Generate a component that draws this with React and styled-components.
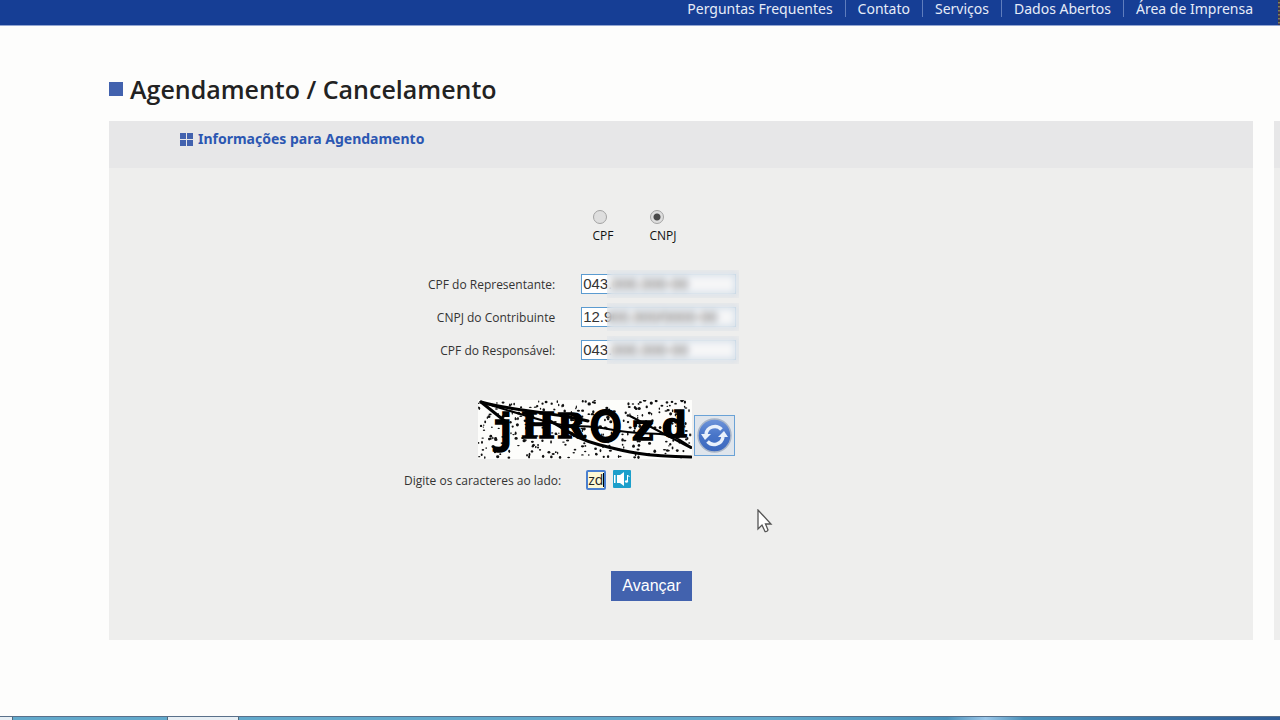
import React, { useState } from "react";
import styled, { createGlobalStyle } from "styled-components";

const LINKS = [
  "Perguntas Frequentes",
  "Contato",
  "Serviços",
  "Dados Abertos",
  "Área de Imprensa",
];

const FIELDS = [
  { id: "representante", label: "CPF do Representante:", value: "043.000.000-00" },
  { id: "contribuinte", label: "CNPJ do Contribuinte", value: "12.900.000/0000-00" },
  { id: "responsavel", label: "CPF do Responsável:", value: "043.000.000-00" },
];

// same seed every time, so the noise does not move between renders
const makeSpecks = (count) => {
  let seed = 77;
  const next = () => {
    seed = (seed * 16807) % 2147483647;
    return seed / 2147483647;
  };
  return Array.from({ length: count }, () => ({
    x: next() * 213,
    y: next() * 58,
    rx: 0.6 + next() * 1.1,
    ry: 0.6 + next() * 1.1,
  }));
};
const SPECKS = makeSpecks(330);

const CaptchaImage = () => (
  <svg width="214" height="59" viewBox="0 0 214 59" role="img" aria-label="Captcha">
    <rect width="214" height="59" fill="#fdfdfb" />
    {SPECKS.map((s, i) => (
      <ellipse key={i} cx={s.x} cy={s.y} rx={s.rx} ry={s.ry} fill="#111" />
    ))}
    <g
      fontFamily="'DejaVu Serif', serif"
      fontWeight="700"
      fill="#000"
      stroke="#000"
      strokeWidth="1.5"
    >
      <text x="13" y="43" fontSize="42" fontFamily="'Liberation Mono', monospace">j</text>
      <text x="43" y="38" fontSize="36">H</text>
      <text x="79" y="38" fontSize="34">R</text>
      <text x="112" y="41" fontSize="40" fontFamily="'DejaVu Sans', sans-serif" fontWeight="400" strokeWidth="3">O</text>
      <text x="154" y="40" fontSize="38">z</text>
      <text x="184" y="37" fontSize="36">d</text>
    </g>
    <g fill="none" stroke="#000" strokeLinecap="round">
      <path d="M3 2 C25 9 45 15 70 22 S105 24 130 29 S165 33 182 34 S205 43 213 47" strokeWidth="2" />
      <path d="M3 2 C35 11 75 12 110 21" strokeWidth="3" />
      <path d="M70 20 C90 30 95 38 122 45 S165 56 213 57" strokeWidth="3" />
      <path d="M3 2 L28 22" strokeWidth="3" />
      <path d="M152 16 L213 48" strokeWidth="2" />
    </g>
  </svg>
);

const RefreshIcon = () => (
  <svg width="37" height="37" viewBox="0 0 37 37" aria-hidden="true">
    <defs>
      <linearGradient id="ball" x1="0" y1="0" x2="0" y2="1">
        <stop offset="0" stopColor="#6f95da" />
        <stop offset="0.5" stopColor="#4774c8" />
        <stop offset="1" stopColor="#3c68bd" />
      </linearGradient>
    </defs>
    <circle cx="18.5" cy="18.5" r="16.5" fill="url(#ball)" stroke="#a9b6c9" strokeWidth="1.5" />
    <g fill="none" stroke="#e9f1fc" strokeWidth="3.5">
      <path d="M10 17 A9 9 0 0 1 25.5 12.5" />
      <path d="M27 20 A9 9 0 0 1 11.5 24.5" />
    </g>
    <path d="M5 17 H15 L9 23 Z" fill="#e9f1fc" />
    <path d="M32 20 H22 L28 14 Z" fill="#e9f1fc" />
  </svg>
);

const SoundIcon = () => (
  <svg width="18" height="18" viewBox="0 0 18 18" aria-hidden="true">
    <rect width="18" height="18" rx="1" fill="#1c9fcb" />
    <path d="M1 5 H2.5 V13 H1 Z M4 5 H7 L11 2 V16 L7 13 H4 Z" fill="#fff" />
    <path d="M14.5 11 V5 L16.5 7" fill="none" stroke="#fff" />
    <ellipse cx="13.5" cy="11.5" rx="1.6" ry="1.3" fill="#fff" />
  </svg>
);

const GridIcon = () => (
  <svg width="13" height="13" viewBox="0 0 13 13" fill="#4262ae" aria-hidden="true">
    <path d="M0 0h6v6H0z M7 0h6v6H7z M0 7h6v6H0z M7 7h6v6H7z" />
  </svg>
);

export default function App() {
  const [person, setPerson] = useState("cnpj");
  const [code, setCode] = useState("zd");

  return (
    <Page>
      <GlobalStyle />
      <TopBar>
        <Nav>
          {LINKS.map((link) => (
            <NavLink href="#" key={link}>
              {link}
            </NavLink>
          ))}
        </Nav>
        <BarEdge />
      </TopBar>

      <Main>
        <Title>Agendamento / Cancelamento</Title>
        <Columns>
          <Panel>
            <PanelHeader>
              <GridIcon />
              <PanelTitle>Informações para Agendamento</PanelTitle>
            </PanelHeader>
            <Form onSubmit={(e) => e.preventDefault()}>
              <RadioRow>
                {["cpf", "cnpj"].map((type) => (
                  <RadioLabel key={type}>
                    <Radio
                      type="radio"
                      name="person"
                      checked={person === type}
                      onChange={() => setPerson(type)}
                    />
                    {type.toUpperCase()}
                  </RadioLabel>
                ))}
              </RadioRow>

              <Fields>
                {FIELDS.map((field) => (
                  <React.Fragment key={field.id}>
                    <Label htmlFor={field.id}>{field.label}</Label>
                    <Masked>
                      <Input id={field.id} defaultValue={field.value} />
                      <Mask />
                    </Masked>
                  </React.Fragment>
                ))}
              </Fields>

              <CaptchaRow>
                <CaptchaImage />
                <RefreshButton type="button" aria-label="Atualizar imagem">
                  <RefreshIcon />
                </RefreshButton>
              </CaptchaRow>

              <CodeRow>
                <CodeLabel htmlFor="code">Digite os caracteres ao lado:</CodeLabel>
                <CodeBox>
                  <CodeInput
                    id="code"
                    value={code}
                    onChange={(e) => setCode(e.target.value)}
                  />
                  <Caret />
                </CodeBox>
                <SoundButton type="button" aria-label="Ouvir caracteres">
                  <SoundIcon />
                </SoundButton>
              </CodeRow>

              <Submit type="submit">Avançar</Submit>
            </Form>
          </Panel>
          <SidePanel>
            <HeaderStrip />
          </SidePanel>
        </Columns>
      </Main>

      <Taskbar>
        <Task $width="13px" $open />
        <Task $width="155px" />
        <Task $width="71px" $open />
      </Taskbar>

      <Pointer width="16" height="24" viewBox="0 0 16 24" aria-hidden="true">
        <path
          d="M1 1 V20 L5 16 L8 22.5 Q10 23 11 21 L8.5 15 H14 Z"
          fill="#fff"
          stroke="#555"
          strokeWidth="1.3"
        />
      </Pointer>
    </Page>
  );
}

/*STYLES*/
const GlobalStyle = createGlobalStyle`
  * {
    box-sizing: border-box;
  }
  body {
    margin: 0;
    background: #fdfdfc;
    font-family: "Open Sans", sans-serif;
    color: #222;
  }
`;

const Page = styled.div`
  position: relative;
  display: flex;
  flex-direction: column;
  min-height: 100vh;
`;

const TopBar = styled.header`
  display: flex;
  justify-content: flex-end;
  height: 26px;
  background: #163e95;
  border-bottom: 1px solid #93a6d2;
`;

const Nav = styled.nav`
  display: flex;
  align-items: flex-start;
  margin-right: 25px;
`;

const NavLink = styled.a`
  padding-left: 12px;
  font-family: "Noto Sans", sans-serif;
  font-size: 14px;
  line-height: 17px;
  color: #e6ecf8;
  text-decoration: none;

  &:not(:last-child) {
    padding-right: 12px;
    border-right: 1px solid #5f7dbd;
  }
`;

const BarEdge = styled.div`
  width: 2px;
  background: repeating-linear-gradient(#3c3b46 0 2px, #7d8a50 2px 3px, #6c4868 3px 4px);
`;

const Main = styled.main`
  flex: 1;
  padding: 46px 0 40px 109px;
`;

const Title = styled.h1`
  display: flex;
  align-items: center;
  gap: 7px;
  margin: 0 0 15px;
  font-size: 25px;
  font-weight: 600;
  line-height: 34px;

  &::before {
    content: "";
    width: 14px;
    height: 14px;
    background: #4262ae;
  }
`;

const Columns = styled.div`
  display: grid;
  grid-template-columns: 1fr 6px;
  column-gap: 21px;
`;

const Panel = styled.section`
  background: #eeeeed;
`;

const SidePanel = styled.aside`
  background: #eeeeed;
`;

const HeaderStrip = styled.div`
  height: 47px;
  background: #e7e7e8;
`;

const PanelHeader = styled(HeaderStrip)`
  display: flex;
  gap: 5px;
  align-items: center;
  padding: 0 0 11px 71px;
`;

const PanelTitle = styled.h2`
  margin: 0;
  font-family: "Noto Sans", sans-serif;
  font-size: 14px;
  font-weight: 700;
  line-height: 18px;
  color: #2c57b2;
`;

const Form = styled.form`
  padding: 42px 0 39px;
`;

const RadioRow = styled.div`
  display: flex;
  gap: 36px;
  padding-left: calc(42% + 3px);
`;

const RadioLabel = styled.label`
  display: flex;
  flex-direction: column;
  gap: 4px;
  font-size: 12px;
  line-height: 16px;
  color: #111;
`;

const Radio = styled.input`
  appearance: none;
  width: 14px;
  height: 14px;
  margin: 0 0 0 1px;
  border: 1px solid #a3a3a3;
  border-radius: 50%;
  background: #dedede;

  &:checked {
    background: radial-gradient(circle, #4a4a4a 3px, #dedede 4px);
  }
`;

const Fields = styled.div`
  display: grid;
  grid-template-columns: 39% 1fr;
  gap: 13px 26px;
  margin-top: 30px;
`;

const Label = styled.label`
  font-size: 12px;
  line-height: 21px;
  height: 20px;
  text-align: right;
  color: #333;
`;

const CodeLabel = styled(Label)`
  padding-right: 18px;
`;

const Masked = styled.div`
  position: relative;
  width: 155px;
  height: 20px;
`;

const Input = styled.input`
  display: block;
  width: 100%;
  height: 20px;
  padding: 0 1px 2px;
  border: 1px solid #5b9bd0;
  background: #fff;
  font-family: "Liberation Sans", sans-serif;
  font-size: 15px;
  color: #333;
`;

const Mask = styled.span`
  position: absolute;
  top: -4px;
  right: -3px;
  bottom: -4px;
  left: 26px;
  background: rgba(225, 226, 230, 0.3);
  backdrop-filter: blur(3px);
  pointer-events: none;
`;

const CaptchaRow = styled.div`
  display: flex;
  align-items: flex-end;
  gap: 2px;
  margin-top: 40px;
  padding-left: calc(32% + 3px);
`;

const RefreshButton = styled.button`
  display: flex;
  align-items: center;
  justify-content: center;
  width: 41px;
  height: 41px;
  margin-bottom: 3px;
  padding: 0;
  border: 1px solid #6aa2d6;
  background: #dfe5ec;
`;

const CodeRow = styled.div`
  display: grid;
  grid-template-columns: calc(39% + 24px) 20px 18px;
  column-gap: 7px;
  margin-top: 11px;
`;

const CodeBox = styled.div`
  position: relative;
`;

const CodeInput = styled.input`
  display: block;
  width: 20px;
  height: 20px;
  padding: 0 0 1px;
  border: 2px solid #4a7fd0;
  border-radius: 2px;
  background: #fdf8d5;
  font-size: 14px;
  font-family: "Open Sans", sans-serif;
  color: #222;
`;

const Caret = styled.span`
  position: absolute;
  top: 3px;
  right: 2px;
  width: 1px;
  height: 14px;
  background: #000;
`;

const SoundButton = styled.button`
  display: flex;
  width: 18px;
  height: 18px;
  padding: 0;
  border: 0;
  background: none;
`;

const Submit = styled.button`
  display: block;
  height: 30px;
  margin: 81px 0 0 calc(44% - 1px);
  padding: 0 11px;
  border: 0;
  background: #4262ae;
  font-family: "Liberation Sans", sans-serif;
  font-size: 16px;
  color: #fff;
`;

const Taskbar = styled.footer`
  display: flex;
  height: 4px;
  border-top: 1px solid #59708a;
  background: linear-gradient(90deg, #62a9cb, #62a9cb 60%, #4a90b8 74%, #9cc8ea 77%, #4a90b8 80%, #2f5c96);
`;

const Task = styled.span`
  width: ${(props) => props.$width};
  background: ${(props) => (props.$open ? "#e8eff4" : "transparent")};
  border-right: 1px solid #50687c;
`;

const Pointer = styled.svg`
  position: absolute;
  top: 509px;
  left: 757px;
`;
